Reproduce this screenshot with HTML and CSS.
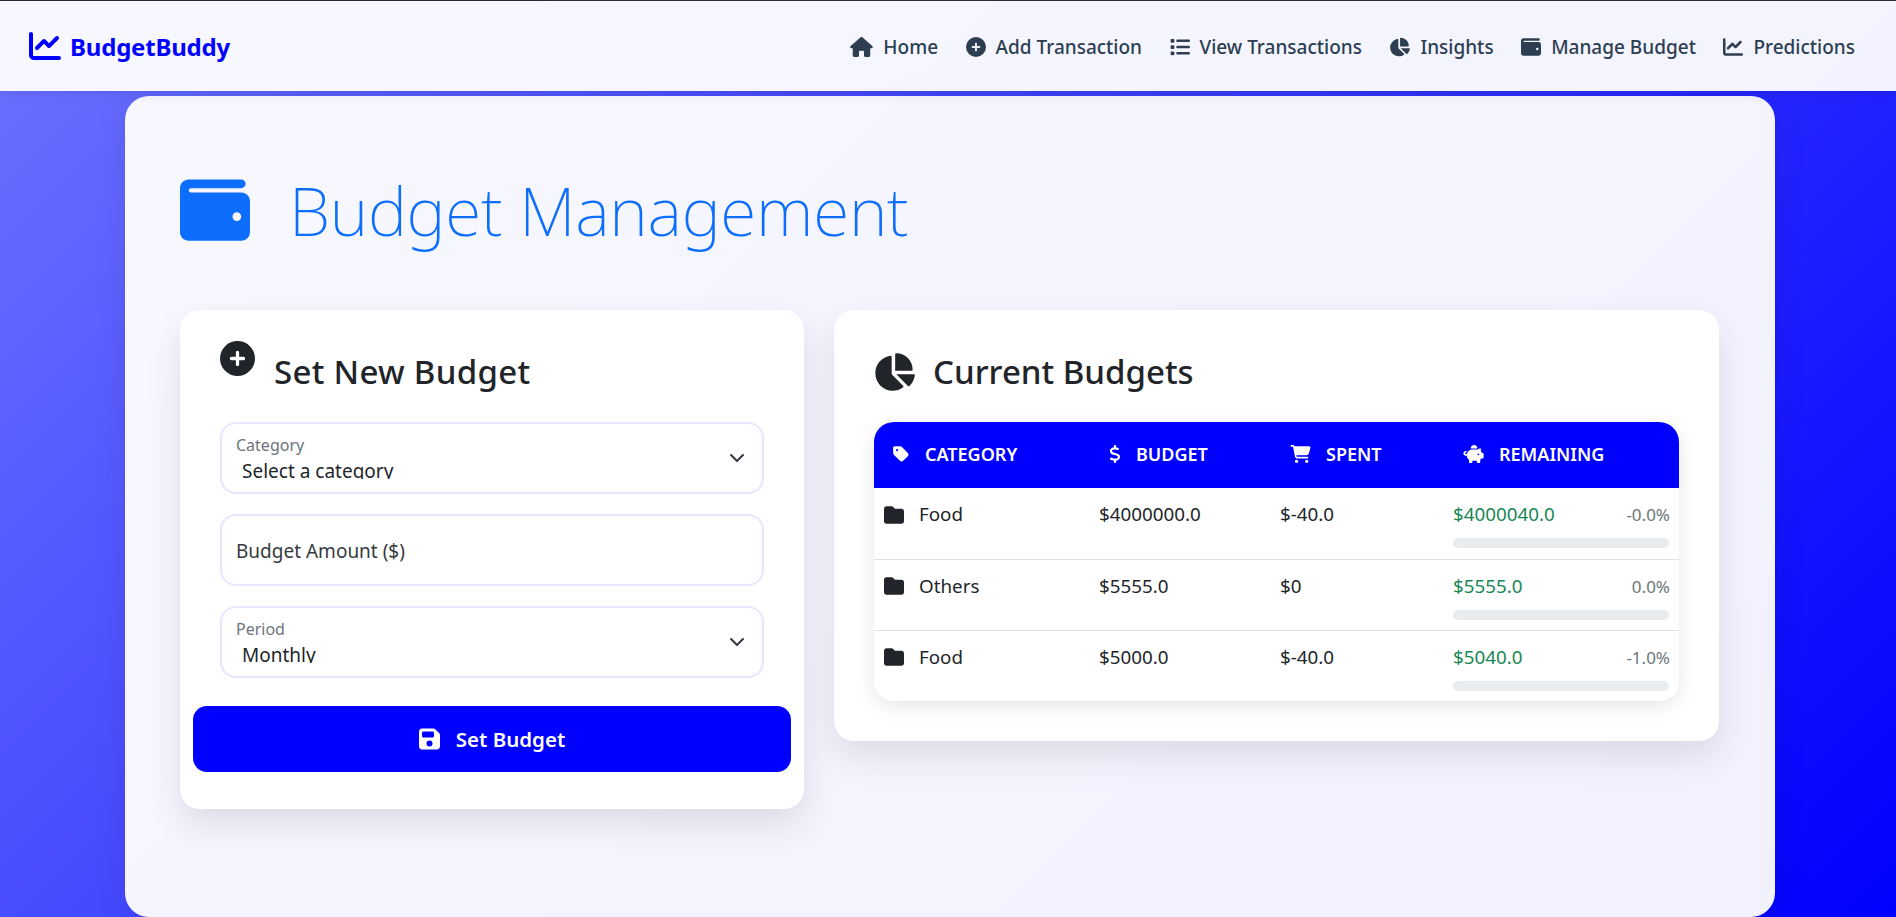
FILE: index.html
```html
<!DOCTYPE html>
<html lang="en">
<head>
<meta charset="utf-8">
<title>BudgetBuddy</title>
<link rel="stylesheet" href="styles.css">
</head>
<body>
<svg class="sprite" aria-hidden="true">
  <symbol id="i-line" viewBox="0 0 512 512"><path d="M64 64c0-17.7-14.3-32-32-32S0 46.3 0 64V400c0 44.2 35.8 80 80 80H480c17.7 0 32-14.3 32-32s-14.3-32-32-32H80c-8.8 0-16-7.2-16-16V64zm406.6 86.6c12.5-12.5 12.5-32.8 0-45.3s-32.8-12.5-45.3 0L320 210.7l-57.4-57.4c-12.5-12.5-32.8-12.5-45.3 0l-112 112c-12.5 12.5-12.5 32.8 0 45.3s32.8 12.5 45.3 0L240 221.3l57.4 57.4c12.5 12.5 32.8 12.5 45.3 0l128-128z"/></symbol>
  <symbol id="i-house" viewBox="0 0 576 512"><path d="M575.8 255.5c0 18-15 32.1-32 32.1h-32l.7 160.2c0 2.7-.2 5.4-.5 8.1V472c0 22.1-17.9 40-40 40H456c-1.1 0-2.2 0-3.3-.1c-1.4 .1-2.8 .1-4.2 .1H416 392c-22.1 0-40-17.9-40-40V448 384c0-17.7-14.3-32-32-32H256c-17.7 0-32 14.3-32 32v64 24c0 22.1-17.9 40-40 40H160 128.1c-1.5 0-3-.1-4.5-.2c-1.2 .1-2.4 .2-3.6 .2H104c-22.1 0-40-17.9-40-40V360c0-.9 0-1.9 .1-2.8V287.6H32c-18 0-32-14-32-32.1c0-9 3-17 10-24L266.4 8c7-7 15-8 22-8s15 2 21 7L564.8 231.5c8 7 12 15 11 24z"/></symbol>
  <symbol id="i-plus" viewBox="0 0 512 512"><path d="M256 512A256 256 0 1 0 256 0a256 256 0 1 0 0 512zM232 344V280H168c-13.3 0-24-10.7-24-24s10.7-24 24-24h64V168c0-13.3 10.7-24 24-24s24 10.7 24 24v64h64c13.3 0 24 10.7 24 24s-10.7 24-24 24H280v64c0 13.3-10.7 24-24 24s-24-10.7-24-24z"/></symbol>
  <symbol id="i-list" viewBox="0 0 512 512"><path d="M40 48C26.7 48 16 58.7 16 72v48c0 13.3 10.7 24 24 24H88c13.3 0 24-10.7 24-24V72c0-13.3-10.7-24-24-24H40zM192 64c-17.7 0-32 14.3-32 32s14.3 32 32 32H480c17.7 0 32-14.3 32-32s-14.3-32-32-32H192zm0 160c-17.7 0-32 14.3-32 32s14.3 32 32 32H480c17.7 0 32-14.3 32-32s-14.3-32-32-32H192zm0 160c-17.7 0-32 14.3-32 32s14.3 32 32 32H480c17.7 0 32-14.3 32-32s-14.3-32-32-32H192zM16 232v48c0 13.3 10.7 24 24 24H88c13.3 0 24-10.7 24-24V232c0-13.3-10.7-24-24-24H40c-13.3 0-24 10.7-24 24zM40 368c-13.3 0-24 10.7-24 24v48c0 13.3 10.7 24 24 24H88c13.3 0 24-10.7 24-24V392c0-13.3-10.7-24-24-24H40z"/></symbol>
  <symbol id="i-pie" viewBox="0 0 576 512"><path d="M304 240V16.6c0-9 7-16.6 16-16.6C443.7 0 544 100.3 544 224c0 9-7.6 16-16.6 16H304zM32 272C32 150.7 122.1 50.3 239 34.3c9.2-1.3 17 6.1 17 15.4V288L412.5 444.5c6.7 6.7 6.2 17.7-1.5 23.1C371.8 495.6 323.8 512 272 512C139.5 512 32 404.6 32 272zm526.4 16c9.3 0 16.6 7.8 15.4 17c-7.7 55.9-34.6 105.6-73.9 142.3c-6 5.6-15.4 5.2-21.2-.7L320 288H558.4z"/></symbol>
  <symbol id="i-wallet" viewBox="0 0 512 512"><path d="M64 32C28.7 32 0 60.7 0 96V416c0 35.3 28.7 64 64 64H448c35.3 0 64-28.7 64-64V192c0-35.3-28.7-64-64-64H80c-8.8 0-16-7.2-16-16s7.2-16 16-16H448c17.7 0 32-14.3 32-32s-14.3-32-32-32H64zM416 272a32 32 0 1 1 0 64 32 32 0 1 1 0-64z"/></symbol>
  <symbol id="i-tag" viewBox="0 0 448 512"><path d="M0 80V229.5c0 17 6.7 33.3 18.7 45.3l176 176c25 25 65.5 25 90.5 0L418.7 317.3c25-25 25-65.5 0-90.5l-176-176c-12-12-28.3-18.7-45.3-18.7H48C21.5 32 0 53.5 0 80zm112 32a32 32 0 1 1 0 64 32 32 0 1 1 0-64z"/></symbol>
  <symbol id="i-dollar" viewBox="0 0 320 512"><path d="M160 0c17.7 0 32 14.3 32 32V67.7c1.6 .2 3.1 .4 4.7 .7c.4 .1 .7 .1 1.1 .2l48 8.8c17.4 3.2 28.9 19.9 25.7 37.2s-19.9 28.9-37.2 25.7l-47.5-8.7c-31.3-4.6-58.9-1.5-78.3 6.2s-27.2 18.3-29 28.1c-2 10.7-.5 16.7 1.2 20.4c1.8 3.9 5.5 8.3 12.8 13.2c16.3 10.7 41.3 17.7 73.7 26.3l2.9 .8c28.6 7.6 63.6 16.8 89.6 33.8c14.2 9.3 27.6 21.9 35.9 39.5c8.5 17.9 10.3 37.9 6.4 59.2c-6.9 38-33.1 63.4-65.6 76.7c-13.7 5.6-28.6 9.2-44.4 11V480c0 17.7-14.3 32-32 32s-32-14.3-32-32V445.1c-.4-.1-.9-.1-1.3-.2l-.2 0 0 0c-24.4-3.8-64.5-14.3-91.5-26.3c-16.1-7.2-23.4-26.1-16.2-42.2s26.1-23.4 42.2-16.2c20.9 9.3 55.3 18.5 75.2 21.6c31.9 4.7 58.2 2 76-5.3c16.9-6.9 24.6-16.9 26.8-28.9c1.9-10.6 .4-16.7-1.3-20.4c-1.9-4-5.6-8.4-13-13.3c-16.4-10.7-41.5-17.7-74-26.3l-2.8-.7 0 0C119.4 279.3 84.4 270 58.4 253c-14.2-9.3-27.5-22-35.8-39.6c-8.4-17.9-10.1-37.9-6.1-59.2C23.7 116 52.3 91.2 84.8 78.3c13.3-5.3 27.9-8.9 43.2-11V32c0-17.7 14.3-32 32-32z"/></symbol>
  <symbol id="i-cart" viewBox="0 0 576 512"><path d="M0 24C0 10.7 10.7 0 24 0H69.5c22 0 41.5 12.8 50.6 32h411c26.3 0 45.5 25 38.6 50.4l-41 152.3c-8.5 31.4-37 53.3-69.5 53.3H170.7l5.4 28.5c2.2 11.3 12.1 19.5 23.6 19.5H488c13.3 0 24 10.7 24 24s-10.7 24-24 24H199.7c-34.6 0-64.3-24.6-70.7-58.5L77.4 54.5c-.7-3.8-4-6.5-7.9-6.5H24C10.7 48 0 37.3 0 24zM128 464a48 48 0 1 1 96 0 48 48 0 1 1 -96 0zm336-48a48 48 0 1 1 0 96 48 48 0 1 1 0-96z"/></symbol>
  <symbol id="i-piggy" viewBox="0 0 576 512"><path d="M400 96l0 .7c-5.3-.4-10.6-.7-16-.7H256c-16.5 0-32.5 2.1-47.8 6c-.1-2-.2-4-.2-6c0-53 43-96 96-96s96 43 96 96zm-16 32c3.5 0 7 .1 10.4 .3c4.2 .3 8.4 .7 12.6 1.3C424.6 109.1 450.8 96 480 96h11.5c10.4 0 18 9.8 15.5 19.9l-13.8 55.2c15.8 14.8 28.7 32.8 37.5 52.9H544c17.7 0 32 14.3 32 32v96c0 17.7-14.3 32-32 32H512c-9.1 12.1-19.9 22.9-32 32v64c0 17.7-14.3 32-32 32H416c-17.7 0-32-14.3-32-32V448H256v32c0 17.7-14.3 32-32 32H192c-17.7 0-32-14.3-32-32V416c-34.9-26.2-58.7-66.3-63.2-112H68c-37.6 0-68-30.4-68-68s30.4-68 68-68h4c13.3 0 24 10.7 24 24s-10.7 24-24 24H68c-11 0-20 9-20 20s9 20 20 20H99.2c12.1-59.8 57.7-107.5 116.3-122.8c12.9-3.4 26.5-5.2 40.5-5.2H384zm64 136a24 24 0 1 0 -48 0 24 24 0 1 0 48 0z"/></symbol>
  <symbol id="i-folder" viewBox="0 0 512 512"><path d="M64 480H448c35.3 0 64-28.7 64-64V160c0-35.3-28.7-64-64-64H288c-10.1 0-19.6-4.7-25.6-12.8L243.2 57.6C231.1 41.5 212.1 32 192 32H64C28.7 32 0 60.7 0 96V416c0 35.3 28.7 64 64 64z"/></symbol>
  <symbol id="i-floppy" viewBox="0 0 448 512"><path d="M64 32C28.7 32 0 60.7 0 96V416c0 35.3 28.7 64 64 64H384c35.3 0 64-28.7 64-64V173.3c0-17-6.7-33.3-18.7-45.3L352 50.7C340 38.7 323.7 32 306.7 32H64zm0 96c0-17.7 14.3-32 32-32H288c17.7 0 32 14.3 32 32v64c0 17.7-14.3 32-32 32H96c-17.7 0-32-14.3-32-32V128zM224 288a64 64 0 1 1 0 128 64 64 0 1 1 0-128z"/></symbol>
  <symbol id="i-chevron" viewBox="0 0 16 16"><path fill="none" stroke="currentColor" stroke-linecap="round" stroke-linejoin="round" stroke-width="2" d="m2 5 6 6 6-6"/></symbol>
</svg>

<nav class="navbar">
  <a class="brand" href="#"><svg class="brand-icon"><use href="#i-line"/></svg>BudgetBuddy</a>
  <ul class="nav-links">
    <li><a href="#"><svg class="nav-icon nav-icon-wide"><use href="#i-house"/></svg>Home</a></li>
    <li><a href="#"><svg class="nav-icon"><use href="#i-plus"/></svg>Add Transaction</a></li>
    <li><a href="#"><svg class="nav-icon"><use href="#i-list"/></svg>View Transactions</a></li>
    <li><a href="#"><svg class="nav-icon nav-icon-pie"><use href="#i-pie"/></svg>Insights</a></li>
    <li><a href="#"><svg class="nav-icon"><use href="#i-wallet"/></svg>Manage Budget</a></li>
    <li><a href="#"><svg class="nav-icon"><use href="#i-line"/></svg>Predictions</a></li>
  </ul>
</nav>

<main class="page">
  <h1 class="page-title"><svg class="title-icon"><use href="#i-wallet"/></svg>Budget Management</h1>
  <div class="columns">
    <section class="card">
      <h2 class="card-title card-title-form"><svg class="plus-icon"><use href="#i-plus"/></svg>Set New Budget</h2>
      <form class="budget-form">
        <div class="field">
          <label class="field-label" for="category">Category</label>
          <select id="category" class="control select"><option>Select a category</option><option>Food</option><option>Others</option></select>
          <svg class="chevron"><use href="#i-chevron"/></svg>
        </div>
        <div class="field">
          <input class="control amount" type="text" placeholder="Budget Amount ($)" aria-label="Budget Amount ($)">
        </div>
        <div class="field">
          <label class="field-label" for="period">Period</label>
          <select id="period" class="control select"><option>Monthly</option><option>Weekly</option><option>Yearly</option></select>
          <svg class="chevron"><use href="#i-chevron"/></svg>
        </div>
        <button class="submit" type="button"><svg class="submit-icon"><use href="#i-floppy"/></svg>Set Budget</button>
      </form>
    </section>

    <section class="card card-top">
      <h2 class="card-title"><svg class="pie-icon"><use href="#i-pie"/></svg>Current Budgets</h2>
      <div class="table-wrap">
        <table class="budget-table">
          <colgroup><col class="col-a"><col class="col-b"><col class="col-c"><col class="col-d"></colgroup>
          <thead>
            <tr>
              <th><span class="th-inner"><svg class="th-icon"><use href="#i-tag"/></svg>Category</span></th>
              <th><span class="th-inner"><svg class="th-icon th-icon-slim"><use href="#i-dollar"/></svg>Budget</span></th>
              <th><span class="th-inner"><svg class="th-icon th-icon-wide"><use href="#i-cart"/></svg>Spent</span></th>
              <th><span class="th-inner"><svg class="th-icon th-icon-wide"><use href="#i-piggy"/></svg>Remaining</span></th>
            </tr>
          </thead>
          <tbody>
            <tr>
              <td><span class="cat"><svg class="folder"><use href="#i-folder"/></svg>Food</span></td>
              <td>$4000000.0</td>
              <td>$-40.0</td>
              <td><div class="rem"><span class="rem-value">$4000040.0</span><span class="rem-pct">-0.0%</span></div><div class="bar"></div></td>
            </tr>
            <tr>
              <td><span class="cat"><svg class="folder"><use href="#i-folder"/></svg>Others</span></td>
              <td>$5555.0</td>
              <td>$0</td>
              <td><div class="rem"><span class="rem-value">$5555.0</span><span class="rem-pct">0.0%</span></div><div class="bar"></div></td>
            </tr>
            <tr>
              <td><span class="cat"><svg class="folder"><use href="#i-folder"/></svg>Food</span></td>
              <td>$5000.0</td>
              <td>$-40.0</td>
              <td><div class="rem"><span class="rem-value">$5040.0</span><span class="rem-pct">-1.0%</span></div><div class="bar"></div></td>
            </tr>
          </tbody>
        </table>
      </div>
    </section>
  </div>
</main>
</body>
</html>
```
FILE: styles.css
```css
* { box-sizing: border-box; }
html { height: 100%; }
body {
  margin: 0;
  height: 917px;
  overflow: hidden;
  font-family: "Noto Sans", "Liberation Sans", sans-serif;
  color: #212529;
  background: linear-gradient(135deg, #6c72ff 0%, #0000ff 100%);
  border-top: 1px solid #2b2b33;
}
.sprite { display: none; }
svg { fill: currentColor; display: block; flex: none; }

.navbar {
  height: 90px;
  display: flex;
  align-items: center;
  justify-content: space-between;
  padding: 0 41px 0 29px;
  background: rgba(255, 255, 255, 0.95);
  box-shadow: 0 2px 12px rgba(0, 0, 0, 0.1);
  position: relative;
}
.brand {
  display: flex;
  align-items: center;
  gap: 9px;
  font-size: 24px;
  font-weight: 700;
  color: #0000ff;
  text-decoration: none;
  letter-spacing: -0.2px;
}
.brand-icon { width: 32px; height: 32px; }
.nav-links { display: flex; gap: 27.5px; list-style: none; margin: 2px 0 0; padding: 0; }
.nav-links a {
  display: flex;
  align-items: center;
  gap: 10px;
  font-size: 19px;
  font-weight: 500;
  color: #2c3e50;
  text-decoration: none;
}
.nav-icon { width: 20px; height: 20px; }
.nav-icon-wide { width: 23px; }
.nav-icon-pie { width: 21px; }

.page {
  width: 1650px;
  height: 821px;
  margin: 5px 0 0 125px;
  padding: 64px 56px 0 55px;
  background: rgba(255, 255, 255, 0.95);
  border-radius: 24px;
  box-shadow: 0 8px 32px rgba(0, 0, 0, 0.1);
}
.page-title {
  display: flex;
  align-items: center;
  gap: 39px;
  margin: 0 0 50px;
  height: 100px;
  font-size: 66px;
  font-weight: 200;
  color: #0d6efd;
  letter-spacing: -0.25px;
}
.title-icon { width: 70px; height: 70px; }

.columns {
  display: grid;
  grid-template-columns: 624px 885px;
  gap: 30px;
  align-items: start;
}
.card {
  background: #fff;
  border-radius: 20px;
  padding: 40px 40px 37px;
  box-shadow: 0 15px 35px rgba(0, 0, 0, 0.1);
}
.card-top { padding-bottom: 40px; }
.card-title {
  display: flex;
  align-items: center;
  gap: 19px;
  margin: 0 0 30px;
  height: 42px;
  font-size: 33px;
  font-weight: 500;
  color: #212529;
}
.card-title-form { letter-spacing: 0.3px; }
.plus-icon { width: 35px; height: 35px; margin: -25px 0 0 0; }
.pie-icon { width: 42px; height: 38px; margin: 2px -1px 0 -1px; }

.budget-form { display: flex; flex-direction: column; gap: 20px; }
.field { position: relative; }
.control {
  display: block;
  width: 100%;
  height: 72px;
  border: 2px solid #e6e6ff;
  border-radius: 16px;
  background: #fff;
  font-family: inherit;
  font-size: 19px;
  color: #212529;
}
.select {
  appearance: none;
  padding: 34px 40px 13px 20px;
  outline: none;
}
.amount { padding: 2px 14px 0; outline: none; }
.amount::placeholder { color: #212529; opacity: 0.9; }
.field-label {
  position: absolute;
  left: 16px;
  top: 12px;
  font-size: 16px;
  color: #6c757d;
}
.chevron {
  position: absolute;
  right: 19px;
  top: 28px;
  width: 16px;
  height: 16px;
  color: #343a40;
  pointer-events: none;
}
.submit {
  display: flex;
  align-items: center;
  justify-content: center;
  gap: 16px;
  height: 66px;
  margin: 8px -27px 0 -27px;
  border: 0;
  border-radius: 14px;
  background: #0000ff;
  color: #fff;
  font-family: inherit;
  font-size: 20.5px;
  font-weight: 600;
}
.submit-icon { width: 21px; height: 24px; }

.table-wrap {
  border-radius: 20px;
  overflow: hidden;
  box-shadow: 0 5px 20px rgba(0, 0, 0, 0.1);
}
.budget-table {
  width: 100%;
  table-layout: fixed;
  border-collapse: collapse;
  background: #fff;
}
.col-a { width: 217px; }
.col-b { width: 181px; }
.col-c { width: 173px; }
.col-d { width: 234px; }
.budget-table thead tr { background: #0000ff; color: #fff; }
.budget-table th {
  height: 66px;
  padding: 0 0 2px 18px;
  text-align: left;
  font-size: 18px;
  font-weight: 600;
  text-transform: uppercase;
  vertical-align: middle;
}
.th-inner { display: flex; align-items: center; gap: 15px; }
.th-icon { width: 18px; height: 18px; }
.th-icon-slim { width: 12px; }
.th-icon-wide { width: 21px; }
.budget-table td {
  height: 71px;
  padding: 13px 10px 9px 8px;
  vertical-align: top;
  font-size: 18.8px;
  line-height: 27px;
  border-top: 1px solid #dee2e6;
}
.budget-table tbody tr:first-child td { border-top: 0; }
.cat { display: flex; align-items: center; gap: 15px; padding-left: 2px; }
.folder { width: 20px; height: 20px; }
.rem { display: flex; justify-content: space-between; }
.rem-value { color: #198754; }
.rem-pct { color: #6c757d; font-size: 17px; margin-right: -1px; }
.bar {
  height: 10px;
  margin-top: 10px;
  border-radius: 5px;
  background: #e9ecef;
}
```
